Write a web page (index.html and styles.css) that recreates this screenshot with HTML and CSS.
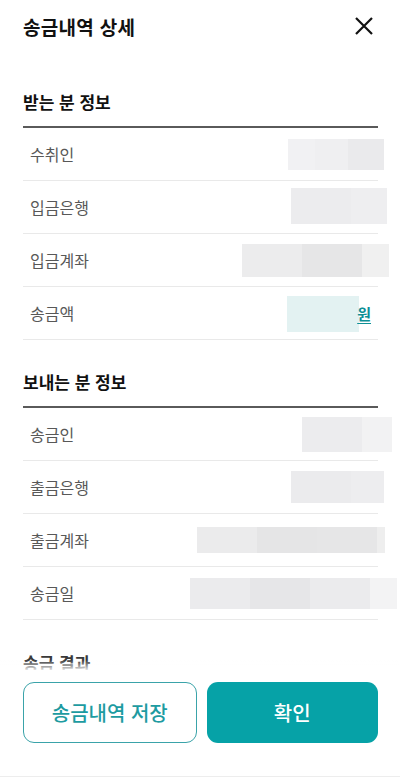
FILE: index.html
```html
<!DOCTYPE html>
<html lang="ko">
<head>
<meta charset="utf-8">
<title>송금내역 상세</title>
<link rel="stylesheet" href="styles.css">
</head>
<body>
<div class="page">
  <header class="top">
    <h1 class="title">송금내역 상세</h1>
    <button class="close" aria-label="닫기">
      <svg width="20" height="20" viewBox="0 0 20 20"><path d="M2 2 L18 18 M18 2 L2 18" stroke="#111" stroke-width="2.2" fill="none"/></svg>
    </button>
  </header>

  <section class="section">
    <h2 class="sec-title">받는 분 정보</h2>
    <div class="row"><span class="label">수취인</span><span class="blur v1"></span></div>
    <div class="row"><span class="label">입금은행</span><span class="blur v2"></span></div>
    <div class="row"><span class="label">입금계좌</span><span class="blur v3"></span></div>
    <div class="row"><span class="label">송금액</span><span class="amount"><span class="blur v4"></span><span class="won">원</span></span></div>
  </section>

  <section class="section">
    <h2 class="sec-title">보내는 분 정보</h2>
    <div class="row"><span class="label">송금인</span><span class="blur v5"></span></div>
    <div class="row"><span class="label">출금은행</span><span class="blur v6"></span></div>
    <div class="row"><span class="label">출금계좌</span><span class="blur v7"></span></div>
    <div class="row"><span class="label">송금일</span><span class="blur v8"></span></div>
  </section>

  <section class="section result">
    <h2 class="sec-title plain">송금 결과</h2>
  </section>
</div>

<footer class="footer">
  <button class="btn btn-outline">송금내역 저장</button>
  <button class="btn btn-fill">확인</button>
</footer>
</body>
</html>
```

FILE: styles.css
```css
* { box-sizing: border-box; }
html, body { margin: 0; padding: 0; background: #fff; }
body {
  font-family: "Noto Sans CJK KR", "Noto Sans", sans-serif;
  color: #111;
  height: 777px;
  overflow: hidden;
}
.page { padding: 0 22px 0 23px; }
.top {
  height: 54px;
  display: flex;
  align-items: center;
  justify-content: space-between;
}
.title {
  margin: 0;
  font-size: 19px;
  font-weight: 700;
  letter-spacing: 0.3px;
  line-height: 24px;
}
.close {
  border: 0;
  background: none;
  padding: 0;
  width: 20px;
  height: 20px;
  margin-right: 4px;
  margin-top: -2px;
  display: flex;
}
.section { display: flex; flex-direction: column; }
.sec-title {
  margin: 36px 0 0;
  padding-bottom: 12px;
  font-size: 17px;
  font-weight: 700;
  line-height: 24px;
  border-bottom: 2px solid #5a5a5a;
}
.section + .section .sec-title { margin-top: 30px; }
.result .sec-title.plain { border-bottom: 0; margin-top: 31px; color: #3a3a3a; }
.row {
  height: 53px;
  border-bottom: 1px solid #e9e9e9;
  display: flex;
  align-items: center;
  justify-content: space-between;
  padding: 0 7px;
}
.label { font-size: 16px; color: #585858; line-height: 20px; }
.blur { display: block; }
.v1 { width: 96px; height: 31px; margin-right: -13px; background: linear-gradient(90deg, #f1f1f3 0 27px, #efeff1 27px 60px, #eaeaec 60px); }
.v2 { width: 96px; height: 36px; margin-right: -16px; margin-top: -2px; background: linear-gradient(90deg, #ececee 0 60px, #eeeef0 60px); }
.v3 { width: 147px; height: 33px; margin-right: -18px; background: linear-gradient(90deg, #ececed 0 60px, #e6e6e7 60px 120px, #f0f0f0 120px); }
.amount { display: flex; align-items: center; }
.v4 { width: 72px; height: 36px; background: #e3f2f2; margin-top: 2px; }
.won {
  color: #0f9096;
  font-weight: 700;
  font-size: 15px;
  text-decoration: underline;
  text-underline-offset: 3px;
  margin-left: -2px;
}
.v5 { width: 90px; height: 35px; margin-right: -21px; background: linear-gradient(90deg, #ececee 0 60px, #f2f2f3 60px); }
.v6 { width: 93px; height: 32px; margin-right: -13px; background: linear-gradient(90deg, #ebebed 0 60px, #ededef 60px); }
.v7 { width: 188px; height: 26px; margin-right: -14px; background: linear-gradient(90deg, #ebebec 0 60px, #e5e5e6 60px 120px, #e6e6e7 120px 180px, #eeeeee 180px); }
.v8 { width: 207px; height: 31px; margin-right: -26px; background: linear-gradient(90deg, #ebebed 0 60px, #e6e6e8 60px 120px, #ebebed 120px 180px, #f3f3f4 180px); }

.footer {
  position: fixed;
  left: 0;
  right: 0;
  bottom: 0;
  background: #fff;
  padding: 12px 22px 33px 23px;
  display: flex;
  gap: 10px;
  border-bottom: 1px solid #ededed;
}
.footer::before {
  content: "";
  position: absolute;
  left: 0;
  right: 0;
  top: -10px;
  height: 10px;
  background: linear-gradient(rgba(255,255,255,0), rgba(255,255,255,0.85));
}
.btn {
  flex: 1 1 0;
  min-width: 0;
  margin: 0;
  height: 61px;
  border-radius: 11px;
  font-family: inherit;
  font-size: 20px;
  font-weight: 500;
  padding: 0;
}
.btn-outline {
  background: #fff;
  border: 1.5px solid #3aa3a9;
  color: #1d9ba1;
}
.btn-fill {
  background: #06a2a7;
  border: 0;
  color: #fff;
}
```
